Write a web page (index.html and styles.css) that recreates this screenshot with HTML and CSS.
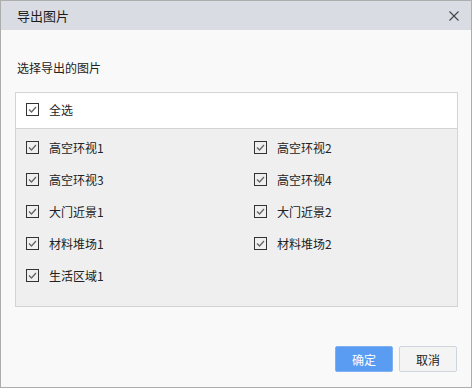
FILE: index.html
```html
<!DOCTYPE html>
<html lang="zh-CN">
<head>
  <meta charset="UTF-8" />
  <title>导出图片</title>
  <link rel="stylesheet" href="styles.css">
</head>
<body>
  <div class="dialog">
    <div class="dialog-header">
      <span class="dialog-title">导出图片</span>
      <svg class="close" width="10" height="10" viewBox="0 0 10 10">
        <path d="M0.5 0.5 L9.5 9.5 M9.5 0.5 L0.5 9.5" stroke="#444" stroke-width="1.1" fill="none"/>
      </svg>
    </div>

    <div class="dialog-body">
      <div class="hint">选择导出的图片</div>
      <div class="select-box">
        <label class="check all-row">
          <span class="box"><svg width="13" height="13" viewBox="0 0 13 13"><rect x="0.5" y="0.5" width="12" height="12" fill="none" stroke="#333"/><path d="M3 6.5 L5.5 9 L10 4" stroke="#666" stroke-width="1.3" fill="none"/></svg></span>
          全选
        </label>
        <div class="items" id="items"></div>
      </div>
    </div>

    <div class="dialog-footer">
      <button class="btn btn-primary">确定</button>
      <button class="btn">取消</button>
    </div>
  </div>

  <script>
    const names = ['高空环视1', '高空环视2', '高空环视3', '高空环视4', '大门近景1', '大门近景2', '材料堆场1', '材料堆场2', '生活区域1'];
    const checkSvg = '<svg width="13" height="13" viewBox="0 0 13 13"><rect x="0.5" y="0.5" width="12" height="12" fill="none" stroke="#333"/><path d="M3 6.5 L5.5 9 L10 4" stroke="#666" stroke-width="1.3" fill="none"/></svg>';
    const items = document.getElementById('items');
    names.forEach(name => {
      const label = document.createElement('label');
      label.className = 'check';
      label.innerHTML = `<span class="box">${checkSvg}</span>${name}`;
      items.appendChild(label);
    });
  </script>
</body>
</html>
```

FILE: styles.css
```css
html, body {
  margin: 0;
  padding: 0;
}
body {
  font-family: "Noto Sans CJK SC", "Noto Sans", sans-serif;
  font-size: 12px;
  color: #222;
}
.dialog {
  width: 472px;
  height: 388px;
  box-sizing: border-box;
  border: 1px solid #adadad;
  background-color: #f9f9f9;
  display: flex;
  flex-direction: column;
}
.dialog-header {
  height: 29px;
  background-color: #d9dde3;
  display: flex;
  align-items: center;
  justify-content: space-between;
  padding: 0 12px 0 16px;
}
.dialog-title {
  font-size: 13px;
  color: #1a1a1a;
}
.close {
  display: block;
}
.dialog-body {
  padding: 0 13px 0 14px;
}
.hint {
  line-height: 16px;
  padding: 30px 0 0 2px;
  margin-bottom: 16px;
}
.select-box {
  border: 1px solid #d4d4d4;
  background-color: #efefef;
}
.check {
  display: flex;
  align-items: center;
  height: 13px;
  line-height: 13px;
}
.box {
  display: block;
  width: 13px;
  height: 13px;
  margin-right: 10px;
}
.box svg {
  display: block;
}
.all-row {
  height: 13px;
  padding: 10px 10px 12px;
  background-color: #fff;
  border-bottom: 1px solid #d4d4d4;
}
.items {
  display: grid;
  grid-template-columns: 228px 1fr;
  row-gap: 19px;
  padding: 12px 10px 24px;
}
.dialog-footer {
  margin-top: auto;
  display: flex;
  justify-content: flex-end;
  gap: 6px;
  padding: 0 14px 15px;
}
.btn {
  width: 58px;
  height: 26px;
  border: 1px solid #cfd4de;
  border-radius: 2px;
  background-color: #f4f4f4;
  font-family: inherit;
  font-size: 12px;
  color: #222;
  padding: 0;
}
.btn-primary {
  background-color: #599cf2;
  border-color: #7fb1f2;
  color: #fff;
}
```
